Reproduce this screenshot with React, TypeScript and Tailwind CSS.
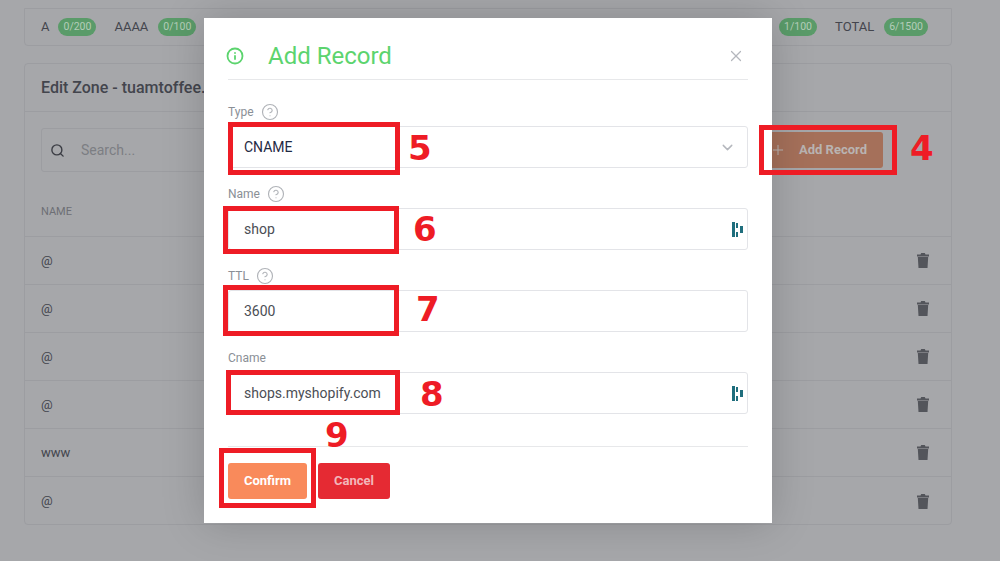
import { ChevronDown, CircleHelp, Info, Plus, Search, X } from 'lucide-react'

const hiddenCounts = [
  { label: 'CNAME', count: '3/200' },
  { label: 'MX', count: '0/100' },
  { label: 'TXT', count: '1/100' },
  { label: 'SRV', count: '0/100' },
  { label: 'CAA', count: '0/100' },
  { label: 'NS', count: '1/100' },
  { label: 'PTR', count: '1/100' },
]

const rows = ['@', '@', '@', '@', 'www', '@']

const Chip = ({ children }: { children: string }) => (
  <span className="rounded-full bg-[#5a9b69] px-[5px] text-[10.5px] leading-[18px] text-[#b4cdb9]">{children}</span>
)

// teal password-manager mark shown inside the inputs
const FieldMark = () => (
  <svg width="11" height="15" viewBox="0 0 11 15" className="shrink-0">
    <path d="M0 0h3v15H0z" fill="#1f6e7d" />
    <path d="M4 1h2v5H4zM4 10h2v5H4z" fill="#1f6e7d" />
    <path d="M8 4h3v7H8z" fill="#1f6e7d" />
  </svg>
)

const TrashIcon = () => (
  <svg width="12" height="15" viewBox="0 0 12 15" className="shrink-0">
    <path d="M0 1.500h3.500L4.200 0h3.600l.7 1.500H12V3.500H0z" fill="#53555b" />
    <path d="M.8 4h10.400l-.7 11h-9z" fill="#53555b" />
  </svg>
)

const Field = ({ label, help, value, mark, select, dark }: { label: string; help?: boolean; value: string; mark?: boolean; select?: boolean; dark?: boolean }) => (
  <div className="flex flex-col">
    <div className="flex h-[20px] items-center gap-[7px] text-[12px] text-[#8a8f96]">
      {label}
      {help && <CircleHelp size={18} strokeWidth={1.5} className="text-[#b0b3b8]" />}
    </div>
    <div className="mt-[4px] flex h-[42px] items-center justify-between rounded-[3px] border border-[#e3e4e8] pl-[15px] pr-[4px]">
      <span className={`text-[14px] ${dark ? 'text-[#1f2a44]' : 'text-[#4b4e55]'}`}>{value}</span>
      {mark && <FieldMark />}
      {select && <ChevronDown size={17} strokeWidth={2} className="mr-[7px] text-[#b4b7bd]" />}
    </div>
  </div>
)

export default function App() {
  return (
    <div className="relative h-[561px] w-[1000px] overflow-hidden bg-[#a6a7aa] font-['Roboto',sans-serif]">
      {/* Page behind the modal */}
      <div className="flex flex-col gap-[17px] pl-[24px] pr-[48px] pt-[8px] text-[#43454d]">
        <div className="flex h-[38px] items-center gap-[18px] rounded-b border border-[#9c9da1] pl-[16px] pr-[23px] text-[13px]">
          <span className="flex items-center gap-[9px]">A <Chip>0/200</Chip></span>
          <span className="flex items-center gap-[10px]">AAAA <Chip>0/100</Chip></span>
          <div className="flex flex-1 items-center justify-between">
            {hiddenCounts.map((item) => (
              <span key={item.label} className="flex items-center gap-[10px]">{item.label} <Chip>{item.count}</Chip></span>
            ))}
          </div>
          <span className="flex items-center gap-[10px]">TOTAL <Chip>6/1500</Chip></span>
        </div>

        <div className="flex h-[462px] flex-col rounded border border-[#9c9da1]">
          <div className="flex h-[48px] shrink-0 items-center border-b border-[#9c9da1] pl-[16px] text-[16px] font-medium">
            Edit Zone - tuamtoffee.com
          </div>
          <div className="flex h-[76px] shrink-0 items-center justify-between pl-[16px] pr-[68px]">
            <div className="flex h-[44px] w-[300px] items-center gap-[16px] rounded-[3px] border border-[#9c9da1] px-[8px] text-[14px] text-[#7c7e83]">
              <Search size={15} strokeWidth={2.2} className="text-[#3b3d44]" />
              Search...
            </div>
            <div className="flex h-[36px] w-[130px] items-center gap-[13px] rounded-[3px] bg-[#a5705a] pl-[17px] text-[13px] font-bold text-[#b9b4b2]">
              <Plus size={16} strokeWidth={1.5} />
              Add Record
            </div>
          </div>
          <div className="flex h-[49px] shrink-0 items-center border-b border-[#9c9da1] pl-[16px] text-[11px] text-[#6d6f75]">NAME</div>
          {rows.map((name, i) => (
            <div key={i} className="flex h-[48px] shrink-0 items-center justify-between border-b border-[#9c9da1] pl-[16px] pr-[22px] text-[13px] last:border-b-0">
              {name}
              <TrashIcon />
            </div>
          ))}
        </div>
      </div>

      {/* Modal */}
      <div className="absolute left-[204px] top-[18px] flex h-[505px] w-[568px] flex-col bg-white px-[24px] shadow-[0_0_40px_rgba(0,0,0,0.18)]">
        <div className="flex h-[62px] shrink-0 items-center border-b border-[#e7e8ea] pt-[14px]">
          <Info size={18} strokeWidth={2.4} className="ml-[-2px] text-[#5cd46e]" />
          <span className="ml-[24px] text-[24px] text-[#5cd46e]">Add Record</span>
          <X size={18} strokeWidth={1.6} className="ml-auto mr-[3px] text-[#b4b7bd]" />
        </div>
        <div className="mt-[22px] flex flex-col gap-[16px]">
          <Field label="Type" help value="CNAME" select dark />
          <Field label="Name" help value="shop" mark />
          <Field label="TTL" help value="3600" />
          <Field label="Cname" value="shops.myshopify.com" mark />
        </div>
        <div className="mt-[32px] flex gap-[11px] border-t border-[#e7e8ea] pt-[16px]">
          <button className="h-[36px] w-[79px] rounded-[3px] bg-[#f98a5b] text-[13px] font-bold text-white">Confirm</button>
          <button className="h-[36px] w-[72px] rounded-[3px] bg-[#e52a33] text-[13px] font-bold text-[#f2b6ba]">Cancel</button>
        </div>
      </div>

      {/* Red tutorial annotations */}
      <div className="absolute left-[228px] top-[122px] h-[53px] w-[172px] border-[5px] border-[#ee1c25]" />
      <div className="absolute left-[223px] top-[206px] h-[48px] w-[176px] border-[5px] border-[#ee1c25]" />
      <div className="absolute left-[223px] top-[285px] h-[51px] w-[176px] border-[5px] border-[#ee1c25]" />
      <div className="absolute left-[226px] top-[370px] h-[45px] w-[174px] border-[5px] border-[#ee1c25]" />
      <div className="absolute left-[219px] top-[448px] h-[60px] w-[97px] border-[5px] border-[#ee1c25]" />
      <div className="absolute left-[759px] top-[125px] h-[50px] w-[138px] border-[5px] border-[#ee1c25]" />
      <span className="absolute left-[408px] top-[129px] font-['DejaVu_Sans'] text-[34px] leading-[38px] font-bold text-[#ee1c25]">5</span>
      <span className="absolute left-[413px] top-[210px] font-['DejaVu_Sans'] text-[34px] leading-[38px] font-bold text-[#ee1c25]">6</span>
      <span className="absolute left-[416px] top-[290px] font-['DejaVu_Sans'] text-[34px] leading-[38px] font-bold text-[#ee1c25]">7</span>
      <span className="absolute left-[420px] top-[375px] font-['DejaVu_Sans'] text-[34px] leading-[38px] font-bold text-[#ee1c25]">8</span>
      <span className="absolute left-[325px] top-[416px] font-['DejaVu_Sans'] text-[34px] leading-[38px] font-bold text-[#ee1c25]">9</span>
      <span className="absolute left-[910px] top-[129px] font-['DejaVu_Sans'] text-[34px] leading-[38px] font-bold text-[#ee1c25]">4</span>
    </div>
  )
}
